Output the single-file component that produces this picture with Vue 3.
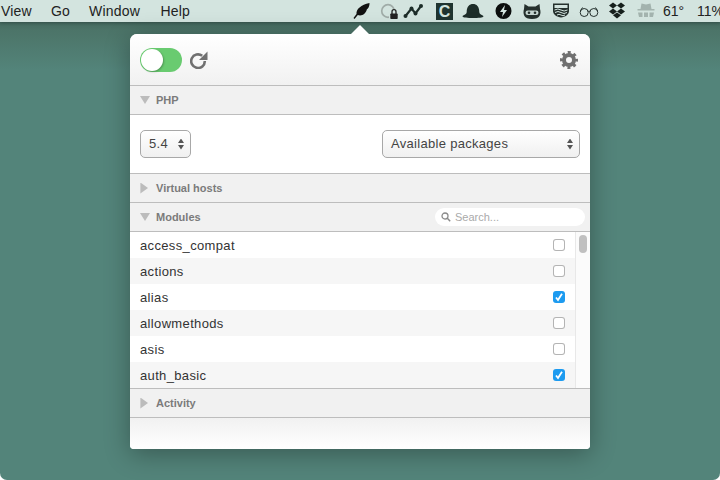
<script setup>
const modules = [
  { name: 'access_compat', on: false },
  { name: 'actions', on: false },
  { name: 'alias', on: true },
  { name: 'allowmethods', on: false },
  { name: 'asis', on: false },
  { name: 'auth_basic', on: true }
]
const menus = ['View', 'Go', 'Window', 'Help']
</script>

<template>
  <div class="desktop">
    <div class="menubar">
      <nav class="menus"><span v-for="m in menus" :key="m">{{ m }}</span></nav>
      <div class="status">
        <svg class="feather" width="18" height="18" viewBox="0 0 18 18"><path d="M0.500 16 L3.500 12 C3 7 8 3 16.500 1 C16.500 5 15 6.500 13.800 7.500 C13 11.500 9 14.500 4.800 13 L1.500 17 Z" fill="#111"/></svg>
        <svg class="lock" width="20" height="18" viewBox="0 0 20 18"><circle cx="8" cy="8" r="6.300" fill="none" stroke="#a0aca8" stroke-width="1.700"/><rect x="9" y="6" width="10" height="11" fill="#d3e4df"/><rect x="10.300" y="10.500" width="7.400" height="5.500" rx=".8" fill="#222"/><path d="M12 11 V8.700 a2 2 0 0 1 4 0 V11" fill="none" stroke="#222" stroke-width="1.300"/></svg>
        <svg class="graph" width="20" height="18" viewBox="0 0 20 18"><path d="M2.500 14 L8.500 6.500 L12.500 11.500 L18 4" fill="none" stroke="#1d2d29" stroke-width="2.200"/><circle cx="2.500" cy="14" r="2" fill="#1d2d29"/><circle cx="8.500" cy="6.500" r="2" fill="#1d2d29"/><circle cx="12.500" cy="11.500" r="2" fill="#1d2d29"/><circle cx="18" cy="4" r="2" fill="#1d2d29"/></svg>
        <span class="cbox">C</span>
        <svg class="hat" width="22" height="16" viewBox="0 0 22 16"><path d="M0.500 13.500 C1 11.500 4.500 12 4.700 9 C4.700 3.500 7.500 1 11 1 C14.500 1 17.300 3.500 17.300 9 C17.500 12 21 11.500 21.500 13.500 C21 15.500 1 15.500 0.500 13.500 Z" fill="#1d2d29"/></svg>
        <svg class="bolt" width="17" height="17" viewBox="0 0 17 17"><circle cx="8.500" cy="8" r="8" fill="#0c0f0e"/><path d="M10 2 L5 9 H8 L7 14 L12 7 H9 Z" fill="#d3e4df"/></svg>
        <svg class="cat" width="20" height="15" viewBox="0 0 20 15"><path d="M2.500 0 L6.500 2.500 H13.500 L17.500 0 L18 5 C19.500 10 18 15 10 15 C2 15 .5 10 2 5 Z" fill="#25302d"/><rect x="3.500" y="6.500" width="13" height="4.500" rx="2.200" fill="#c5d5d0"/><circle cx="7" cy="8.700" r="1.300" fill="#25302d"/><circle cx="13" cy="8.700" r="1.300" fill="#25302d"/></svg>
        <svg class="shield" width="18" height="18" viewBox="0 0 18 18"><path d="M1 1.500 H17 V9 C17 12.500 13 15 9 15.500 C5 15 1 12.500 1 9 Z" fill="#25302d"/><path d="M2.500 3 H15.500 V6 H2.500 Z" fill="#d3e4df"/><path d="M2.500 8 Q6 6 9 8 T15.500 8 M3 10.500 Q6 8.500 9 10.500 T15 10.500 M5 13 Q7 11.500 9 13 T13 13" fill="none" stroke="#d3e4df"/></svg>
        <svg class="glasses" width="20" height="14" viewBox="0 0 20 14"><circle cx="5.200" cy="8.500" r="4" fill="none" stroke="#25302d"/><circle cx="14.800" cy="8.500" r="4" fill="none" stroke="#25302d"/><path d="M9 7.500 Q10 6.500 11 7.500 M1.400 7 L3.500 3.500 M18.600 7 L16.500 3.500" fill="none" stroke="#25302d"/></svg>
        <svg class="dropbox" width="18" height="17" viewBox="0 0 18 17"><path d="M5 .5 L9 3.500 L5 6.500 L1 3.500 Z M13 .5 L17 3.500 L13 6.500 L9 3.500 Z M5 6.500 L9 9.500 L5 12.500 L1 9.500 Z M13 6.500 L17 9.500 L13 12.500 L9 9.500 Z M5 13.300 L9 10.500 L13 13.300 L9 16.500 Z" fill="#161f1c"/></svg>
        <svg class="spy" width="18" height="15" viewBox="0 0 18 15"><path d="M3.500 6 L4.500 .5 L9 1.500 L13.500 .5 L14.500 6 H17.500 V7.500 H.5 V6 Z" fill="#a3b3ae"/><path d="M1 9.500 H5.500 V14 H2 Z M7 9.500 H11 V14 H7 Z M12.500 9.500 H17 L16 14 H12.500 Z" fill="#a3b3ae"/></svg>
        <span class="temp">61°</span>
        <span class="batt">11%</span>
      </div>
    </div>

    <div class="panel">
      <header class="toolbar">
        <div class="switch"><span class="knob"></span></div>
        <svg class="reload" width="18" height="18" viewBox="0 0 18 18"><path d="M14.800 10 A6.800 6.800 0 1 1 12.200 4.800" fill="none" stroke="#707070" stroke-width="2.600"/><path d="M17.500 0.500 V9 H9 Z" fill="#707070"/></svg>
        <svg class="gear" width="18" height="18" viewBox="0 0 18 18"><circle cx="9" cy="9" r="5" fill="none" stroke="#707070" stroke-width="4"/><circle cx="9" cy="9" r="7.500" fill="none" stroke="#707070" stroke-width="3" stroke-dasharray="2.945 2.945" stroke-dashoffset="1.470"/></svg>
      </header>

      <section class="sec">
        <i class="tri down"></i><span>PHP</span>
      </section>
      <div class="php">
        <div class="select short"><span>5.4</span><i class="updown"></i></div>
        <div class="select long"><span>Available packages</span><i class="updown"></i></div>
      </div>
      <section class="sec">
        <i class="tri right"></i><span>Virtual hosts</span>
      </section>
      <section class="sec">
        <i class="tri down"></i><span>Modules</span>
        <div class="search">
          <svg width="10" height="10" viewBox="0 0 10 10"><circle cx="4" cy="4" r="3" fill="none" stroke="#8a8a8a" stroke-width="1.300"/><path d="M6.300 6.300 L9.200 9.200" stroke="#8a8a8a" stroke-width="1.500"/></svg>
          <span>Search...</span>
        </div>
      </section>
      <div class="list">
        <div class="rows">
          <div v-for="m in modules" :key="m.name" class="row">
            <span>{{ m.name }}</span>
            <span class="check" :class="{ on: m.on }">
              <svg v-if="m.on" width="12" height="12" viewBox="0 0 12 12"><path d="M3 6.500 L5 9 L9 2.800" fill="none" stroke="#fff" stroke-width="1.800"/></svg>
            </span>
          </div>
        </div>
        <div class="track"><span class="thumb"></span></div>
      </div>
      <section class="sec">
        <i class="tri right"></i><span>Activity</span>
      </section>
      <footer class="foot"></footer>
      <span class="notch"></span>
    </div>
  </div>
</template>

<style>
html, body { margin: 0; background: #fff; }
</style>

<style scoped>
.desktop {
  position: relative;
  width: 720px;
  height: 480px;
  overflow: hidden;
  box-sizing: border-box;
  padding-top: 34px;
  border-radius: 0 0 7px 7px;
  background: linear-gradient(#44695f 22px, #4c7468 30px, #53847a 70px);
  font-family: "Liberation Sans", Arial, sans-serif;
}
.menubar {
  position: absolute;
  inset: 0 0 auto 0;
  height: 22px;
  display: flex;
  align-items: center;
  justify-content: space-between;
  background: #d3e4df;
  color: #222;
  font-size: 14px;
  box-shadow: 0 1px 3px rgba(0, 0, 0, .25);
}
.menus { display: flex; gap: 19px; padding-left: 1px; letter-spacing: .2px; }
.menus span:last-child { margin-left: 1.500px; }
.status { display: flex; align-items: center; width: 370px; height: 22px; position: relative; }
.status > * { position: absolute; }
.feather { left: 3px; top: 2px; }
.lock { left: 30px; top: 3px; }
.graph { left: 53px; top: 2px; }
.cbox {
  left: 86px; top: 3px; width: 17px; height: 17px;
  background: #1f3430; color: #d3e4df;
  font: bold 16px/17px "Liberation Sans", sans-serif; text-align: center;
}
.hat { left: 112px; top: 3px; }
.bolt { left: 145px; top: 3px; }
.cat { left: 172px; top: 4px; }
.shield { left: 202px; top: 2px; }
.glasses { left: 229px; top: 4px; }
.dropbox { left: 258px; top: 2px; }
.spy { left: 287px; top: 3px; }
.temp { left: 313px; top: 3px; }
.batt { left: 347px; top: 3px; white-space: nowrap; }

.panel {
  position: relative;
  width: 460px;
  height: 415px;
  margin-left: 130px;
  display: flex;
  flex-direction: column;
  border-radius: 7px 7px 4px 4px;
  background: #fff;
  box-shadow: 0 5px 26px rgba(0, 0, 0, .32);
}
.notch {
  position: absolute;
  left: 221px;
  top: -9px;
  width: 0;
  height: 0;
  border: 9px solid transparent;
  border-top: 0;
  border-bottom: 9px solid #fff;
}
.toolbar {
  height: 51px;
  flex: none;
  box-sizing: border-box;
  display: flex;
  align-items: center;
  padding: 1px 12px 0 10px;
  border-radius: 7px 7px 0 0;
  background: linear-gradient(#fff, #f1f1f1);
}
.switch {
  width: 42px;
  height: 24px;
  box-sizing: border-box;
  border-radius: 12px;
  background: #69cb70;
  padding: 1px;
}
.knob {
  display: block;
  width: 22px;
  height: 22px;
  border-radius: 50%;
  background: #fff;
  box-shadow: 1px 1px 2px rgba(0, 0, 0, .25);
}
.reload { margin-left: 8px; }
.gear { margin-left: auto; }
.sec {
  height: 28px;
  flex: none;
  display: flex;
  align-items: center;
  position: relative;
  padding-left: 10px;
  border-top: 1px solid #bdbdbd;
  background: #f1f1f1;
  color: #7b7b7b;
  font-size: 11px;
  font-weight: bold;
}
.tri { display: block; background: #bcbcbc; }
.tri.down { clip-path: polygon(0 0, 100% 0, 50% 100%); width: 10px; height: 8px; margin-right: 6px; }
.tri.right { clip-path: polygon(5% 0, 100% 50%, 5% 100%); height: 11px; width: 8px; margin-right: 8px; }
.php {
  height: 58px;
  flex: none;
  display: flex;
  align-items: center;
  justify-content: space-between;
  padding: 0 10px;
  border-top: 1px solid #bdbdbd;
  background: #fff;
}
.select {
  height: 28px;
  box-sizing: border-box;
  display: flex;
  align-items: center;
  justify-content: space-between;
  padding: 0 6px 0 8px;
  border: 1px solid #a8a8a8;
  border-radius: 5px;
  background: linear-gradient(#fff, #f0f0f0);
  color: #444;
  font-size: 13px;
  letter-spacing: .3px;
}
.select span { padding-bottom: 2px; }
.short { width: 51px; }
.long { width: 198px; }
.updown {
  width: 6px;
  height: 11px;
  display: block;
  background: #555;
  clip-path: polygon(50% 0, 100% 42%, 50% 42%, 50% 58%, 100% 58%, 50% 100%, 0 58%, 50% 58%, 50% 42%, 0 42%);
}
.search {
  position: absolute;
  right: 5px;
  top: 5px;
  width: 150px;
  height: 18px;
  box-sizing: border-box;
  display: flex;
  align-items: center;
  gap: 4px;
  padding-left: 6px;
  border-radius: 9px;
  background: #fff;
  color: #aaa;
  font-size: 11px;
  font-weight: normal;
}
.list {
  height: 156px;
  flex: none;
  display: flex;
  border-top: 1px solid #bdbdbd;
  background: #fff;
  overflow: hidden;
}
.rows { flex: 1; }
.row {
  height: 26px;
  display: flex;
  align-items: center;
  justify-content: space-between;
  padding: 0 10px;
  color: #333;
  font-size: 13px;
  letter-spacing: .35px;
}
.row:nth-child(even) { background: #f6f6f6; }
.check {
  width: 12px;
  height: 12px;
  display: block;
  box-shadow: inset 0 0 0 1px #b4b4b4;
  border-radius: 3px;
  background: #fff;
}
.check.on { background: #1d9bf0; box-shadow: none; }
.check svg { display: block; }
.track {
  width: 14px;
  flex: none;
  border-left: 1px solid #e8e8e8;
  background: #fbfbfb;
  position: relative;
}
.thumb {
  position: absolute;
  left: 3px;
  top: 3px;
  width: 8px;
  height: 18px;
  border-radius: 4px;
  background: #c0c0c0;
}
.foot {
  flex: 1;
  border-top: 1px solid #bdbdbd;
  border-radius: 0 0 4px 4px;
  background: linear-gradient(#f1f1f1, #fff);
}
</style>
